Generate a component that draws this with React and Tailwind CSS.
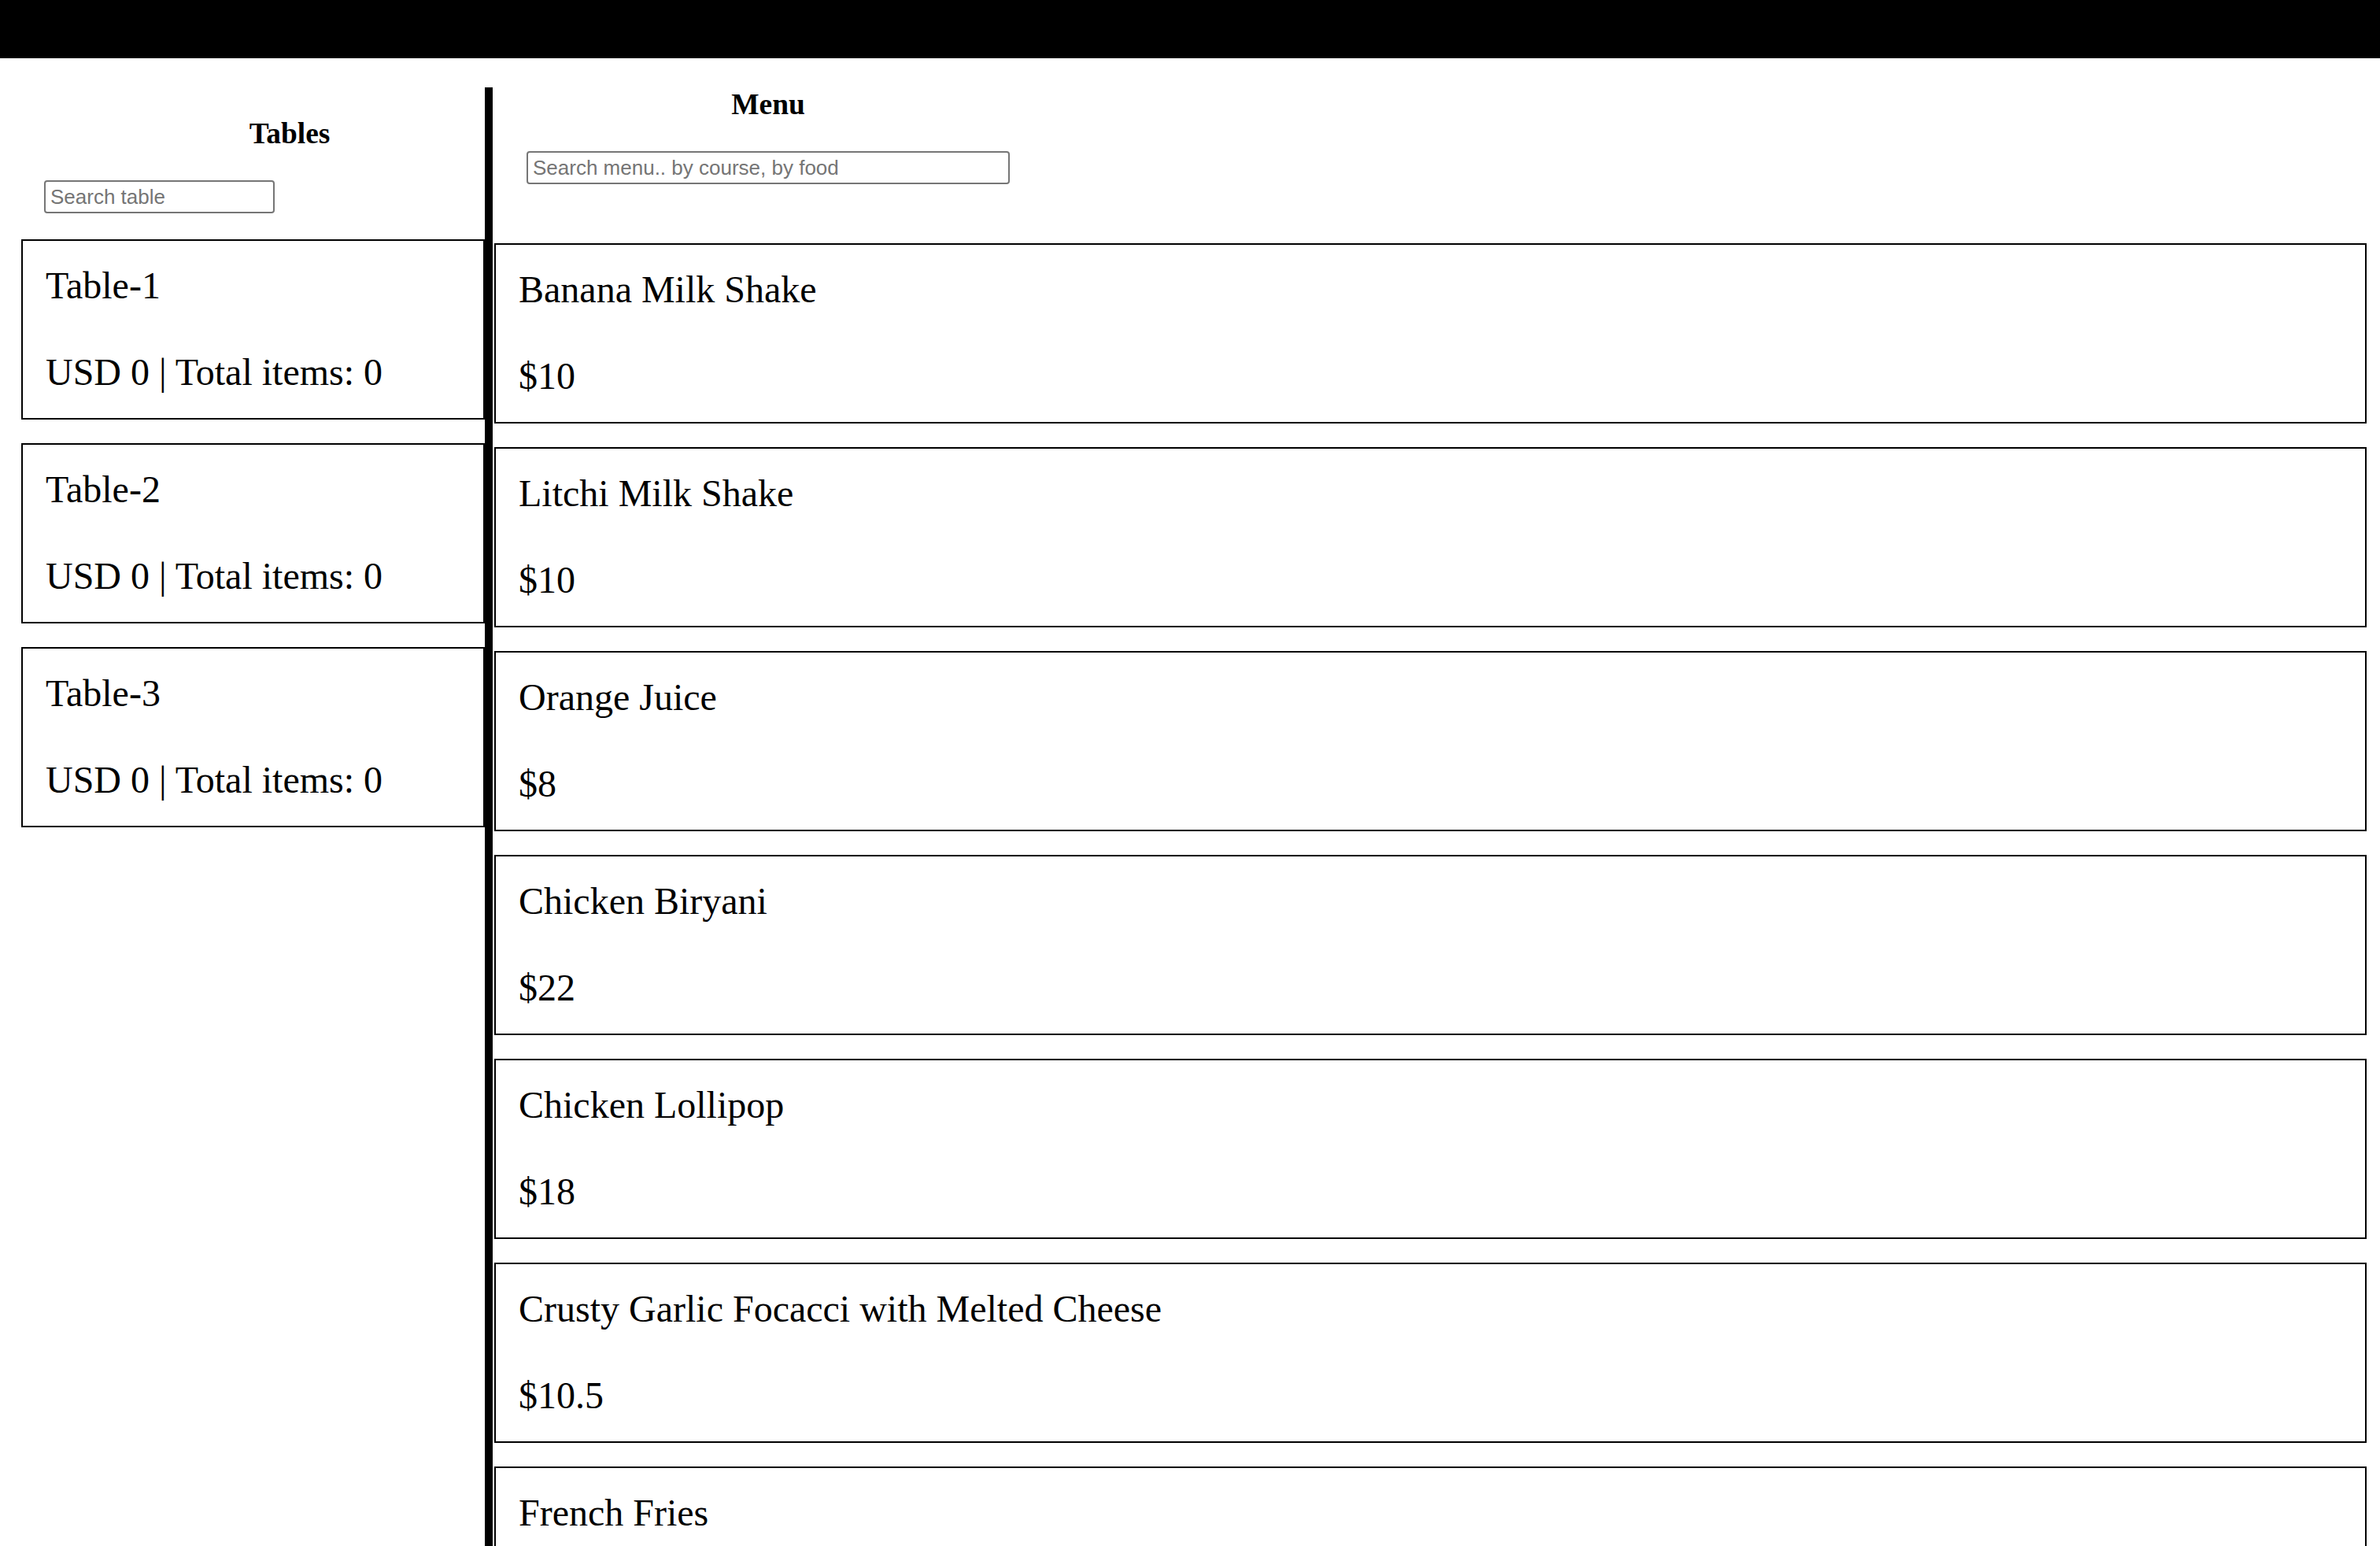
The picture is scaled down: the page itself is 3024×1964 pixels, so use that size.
import React from 'react';

const tables = [
  { id: 1, name: 'Table-1', total: 0, items: 0 },
  { id: 2, name: 'Table-2', total: 0, items: 0 },
  { id: 3, name: 'Table-3', total: 0, items: 0 },
];

const menu = [
  { id: 1, name: 'Banana Milk Shake', price: 10 },
  { id: 2, name: 'Litchi Milk Shake', price: 10 },
  { id: 3, name: 'Orange Juice', price: 8 },
  { id: 4, name: 'Chicken Biryani', price: 22 },
  { id: 5, name: 'Chicken Lollipop', price: 18 },
  { id: 6, name: 'Crusty Garlic Focacci with Melted Cheese', price: 10.5 },
  { id: 7, name: 'French Fries', price: 6 },
];

// карточка стола / блюда
const Card = ({ title, sub }) => (
  <div className="border-2 border-black pl-[29px] pt-[29px] pb-[31px] flex flex-col gap-[55px]">
    <p className="text-[48px] leading-[55px]">{title}</p>
    <p className="text-[48px] leading-[55px]">{sub}</p>
  </div>
);

const inputCls =
  "h-[42px] border-2 border-[#767676] rounded-[4px] px-[6px] text-[26px] font-['Liberation_Sans',Arial,sans-serif] placeholder:text-[#757575] outline-none";

const App = () => {
  return (
    <div className="min-h-screen bg-white text-black font-['Liberation_Serif','Times_New_Roman',serif]">
      <div className="h-[74px] bg-black" />

      <div className="flex pt-[37px]">
        {/* Столы */}
        <div className="w-[616px] shrink-0 pt-[38px]">
          <h3 className="pl-[120px] text-center text-[37.44px] leading-[42px] font-bold">Tables</h3>
          <input className={`${inputCls} ml-[56px] mt-[38px] w-[293px]`} placeholder="Search table" />
          <div className="ml-[27px] mt-[33px] flex flex-col gap-[30px]">
            {tables.map(t => (
              <Card key={t.id} title={t.name} sub={`USD ${t.total} | Total items: ${t.items}`} />
            ))}
          </div>
        </div>

        {/* Меню */}
        <div className="flex-1 border-l-[10px] border-black">
          <div className="pl-[43px] w-[657px] pt-[1px]">
            <h3 className="text-center text-[37.44px] leading-[42px] font-bold">Menu</h3>
            <input className={`${inputCls} mt-[38px] w-[614px]`} placeholder="Search menu.. by course, by food" />
          </div>
          <div className="ml-[2px] mr-[17px] mt-[75px] flex flex-col gap-[30px]">
            {menu.map(m => (
              <Card key={m.id} title={m.name} sub={`$${m.price}`} />
            ))}
          </div>
        </div>
      </div>
    </div>
  );
};

export default App;
